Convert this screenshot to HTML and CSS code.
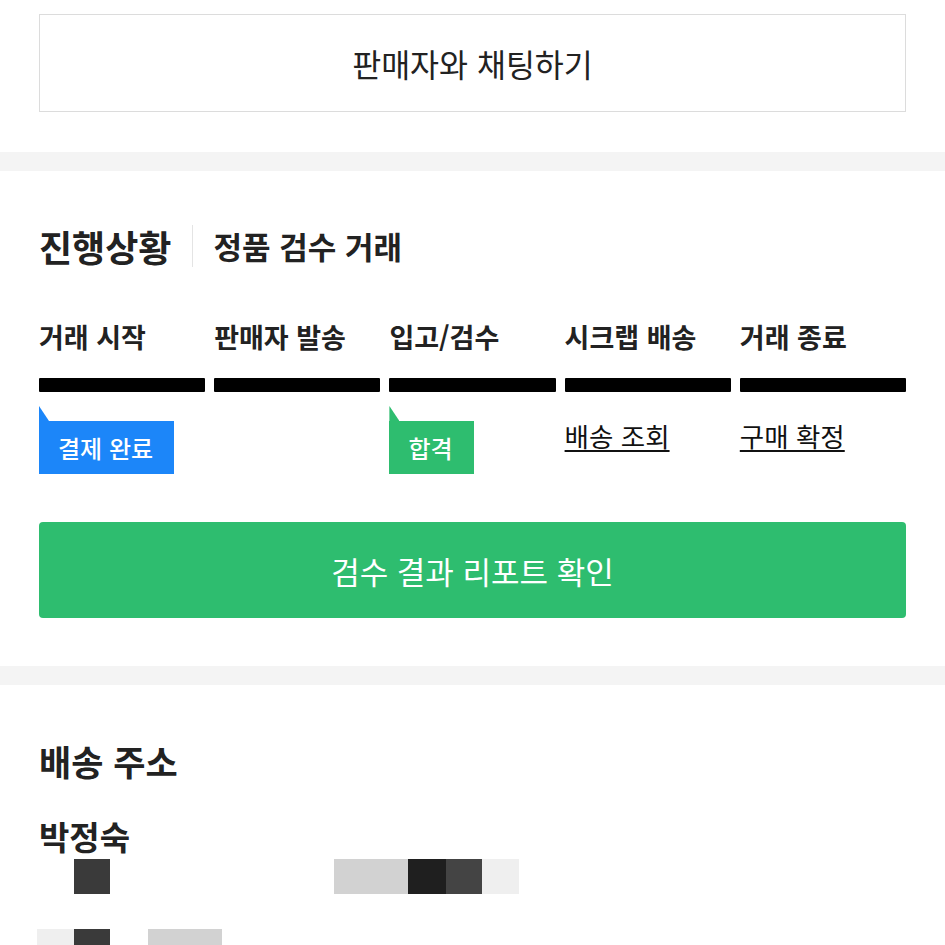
FILE: index.html
```html
<!DOCTYPE html>
<html lang="ko">
<head>
  <meta charset="UTF-8" />
  <meta name="viewport" content="width=device-width, initial-scale=1.0"/>
  <title>거래 상세</title>
  <link rel="stylesheet" href="styles.css">
</head>
<body>

  <section class="block chat-block">
    <button class="chat-btn">판매자와 채팅하기</button>
  </section>

  <div class="band"></div>

  <section class="block progress-block">
    <h2 class="progress-title">
      <span>진행상황</span>
      <span class="sep"></span>
      <span class="type">정품 검수 거래</span>
    </h2>

    <div class="steps">
      <div class="step">
        <div class="step-label">거래 시작</div>
        <div class="bar"></div>
        <div class="status">
          <div class="badge blue"><i class="tail"></i><span>결제 완료</span></div>
        </div>
      </div>
      <div class="step">
        <div class="step-label">판매자 발송</div>
        <div class="bar"></div>
        <div class="status"></div>
      </div>
      <div class="step">
        <div class="step-label">입고/검수</div>
        <div class="bar"></div>
        <div class="status">
          <div class="badge green"><i class="tail"></i><span>합격</span></div>
        </div>
      </div>
      <div class="step">
        <div class="step-label">시크랩 배송</div>
        <div class="bar"></div>
        <div class="status"><a class="step-link" href="#">배송 조회</a></div>
      </div>
      <div class="step">
        <div class="step-label">거래 종료</div>
        <div class="bar"></div>
        <div class="status"><a class="step-link" href="#">구매 확정</a></div>
      </div>
    </div>

    <button class="report-btn">검수 결과 리포트 확인</button>
  </section>

  <div class="band"></div>

  <section class="block address-block">
    <h2 class="address-title">배송 주소</h2>
    <div class="name">박정숙</div>
    <div class="redact row1">
      <span class="r dark" style="width:36px"></span>
      <span class="r none" style="width:224px"></span>
      <span class="r light" style="width:74px"></span>
      <span class="r black" style="width:38px"></span>
      <span class="r mid" style="width:36px"></span>
      <span class="r pale" style="width:37px"></span>
    </div>
    <div class="redact row2">
      <span class="r pale" style="width:37px"></span>
      <span class="r dark" style="width:36px"></span>
      <span class="r none" style="width:38px"></span>
      <span class="r light" style="width:74px"></span>
    </div>
  </section>

</body>
</html>
```

FILE: styles.css
```css
body {
  margin: 0;
  padding: 0;
  background: #fff;
  color: #222;
  font-family: "Noto Sans CJK KR", "Noto Sans", sans-serif;
  overflow: hidden;
}

.block {
  padding: 0 39px;
}

.band {
  height: 19px;
  background: #f4f4f4;
}

/* chat */
.chat-block {
  padding-top: 14px;
  padding-bottom: 40px;
}

.chat-btn {
  display: block;
  width: 100%;
  height: 98px;
  background: #fff;
  border: 1px solid #dcdcdc;
  font-family: inherit;
  font-size: 31.5px;
  color: #222;
  padding: 0;
}

/* progress */
.progress-block {
  padding-top: 55px;
  padding-bottom: 48px;
}

.progress-title {
  display: flex;
  align-items: center;
  margin: 0;
  height: 40px;
  font-size: 36px;
  font-weight: 700;
  line-height: 40px;
}

.progress-title .sep {
  width: 1px;
  height: 42px;
  background: #e4e4e4;
  margin: 0 20px 0 21px;
}

.progress-title .type {
  font-size: 31px;
  font-weight: 600;
}

.steps {
  display: grid;
  grid-template-columns: repeat(5, 1fr);
  gap: 9px;
  margin-top: 56px;
}

.step-label {
  font-size: 27px;
  font-weight: 700;
  line-height: 30px;
  height: 30px;
  white-space: nowrap;
}

.bar {
  height: 14px;
  margin-top: 26px;
  background: #000;
  border-radius: 1px;
}

.status {
  height: 72px;
  margin-top: 10px;
}

.badge {
  display: inline-flex;
  flex-direction: column;
  align-items: flex-start;
}

.badge .tail {
  display: block;
  width: 10px;
  height: 15px;
  clip-path: polygon(0 0, 100% 100%, 0 100%);
}

.badge span {
  display: block;
  height: 53px;
  line-height: 53px;
  padding: 0 21px 0 19px;
  color: #fff;
  font-size: 24px;
  font-weight: 500;
}

.badge.blue .tail,
.badge.blue span {
  background: #1c86f9;
}

.badge.green .tail,
.badge.green span {
  background: #2ebd6f;
}

.step-link {
  display: inline-block;
  margin-top: 19px;
  font-size: 26.5px;
  line-height: 30px;
  color: #111;
  text-decoration: underline;
  text-underline-offset: 3px;
  text-decoration-thickness: 2px;
}

.report-btn {
  display: block;
  width: 100%;
  height: 96px;
  margin-top: 48px;
  background: #2ebd6f;
  border: none;
  border-radius: 4px;
  color: #fff;
  font-family: inherit;
  font-size: 31px;
  padding: 0;
}

/* address */
.address-block {
  padding-top: 56px;
}

.address-title {
  margin: 0;
  font-size: 35px;
  font-weight: 700;
  line-height: 40px;
}

.name {
  margin-top: 37px;
  font-size: 33px;
  font-weight: 600;
  line-height: 36px;
}

.redact {
  display: flex;
}

.redact.row1 {
  margin-top: 5px;
  margin-left: 35px;
  height: 35px;
}

.redact.row2 {
  margin-top: 35px;
  margin-left: -2px;
  height: 20px;
}

.r {
  display: block;
  height: 100%;
}

.r.dark { background: #3a3a3a; }
.r.black { background: #1f1f1f; }
.r.mid { background: #444; }
.r.light { background: #d2d2d2; }
.r.pale { background: #efefef; }
.r.none { background: transparent; }
```
